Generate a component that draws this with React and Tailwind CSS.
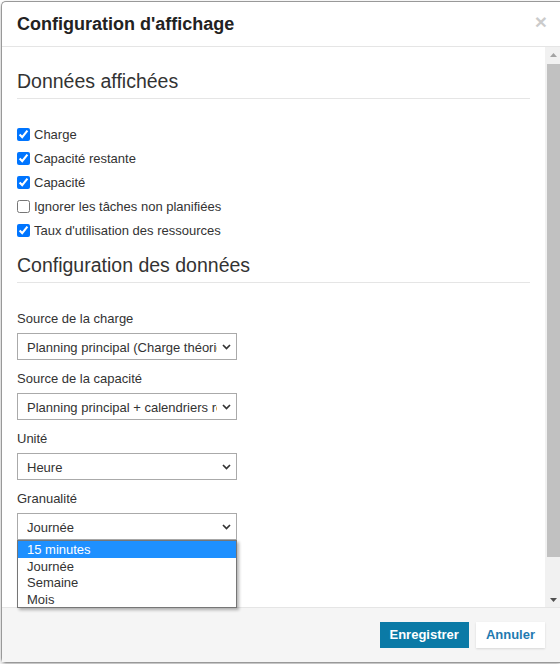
const checks = [
  { label: 'Charge', checked: true },
  { label: 'Capacité restante', checked: true },
  { label: 'Capacité', checked: true },
  { label: 'Ignorer les tâches non planifiées', checked: false },
  { label: "Taux d'utilisation des ressources", checked: true },
];

const selects = [
  { label: 'Source de la charge', value: 'Planning principal (Charge théorique)' },
  { label: 'Source de la capacité', value: 'Planning principal + calendriers ressources' },
  { label: 'Unité', value: 'Heure' },
  { label: 'Granualité', value: 'Journée', open: true },
];

const granularity = ['15 minutes', 'Journée', 'Semaine', 'Mois'];

function Chevron() {
  return (
    <svg
      className="absolute right-[6px] top-1/2 -translate-y-1/2 pointer-events-none"
      width="9"
      height="6"
      viewBox="0 0 9 6"
    >
      <path d="M1 1l3.5 3.5L8 1" fill="none" stroke="#333" strokeWidth="1.7" />
    </svg>
  );
}

function SelectField({ label, value, open }) {
  return (
    <div className="mb-[9px]">
      <div className="text-[13px] leading-[20px] mb-[4px]">{label}</div>
      <div className="relative w-[220px]">
        <select
          className="block w-full h-[27px] appearance-none bg-white border border-[#aaa] text-[13px] text-[#333] pl-[9px] pr-[19px] pt-[2px] outline-none"
          defaultValue={value}
        >
          <option value={value}>{value}</option>
        </select>
        <Chevron />
        {open && (
          <div className="absolute left-0 top-full z-10 w-full bg-white border border-[#767676] shadow-[2px_2px_3px_rgba(0,0,0,0.3)]">
            {granularity.map((g, i) => (
              <div
                key={g}
                className={
                  i === 0
                    ? 'h-[16.5px] leading-[16.5px] pt-[1px] pl-[9px] text-[13px] bg-[#1e90ff] text-white'
                    : 'h-[16.5px] leading-[16.5px] pt-[1px] pl-[9px] text-[13px] text-[#333]'
                }
              >
                {g}
              </div>
            ))}
          </div>
        )}
      </div>
    </div>
  );
}

export default function App() {
  return (
    <div className="w-[560px] h-[664px] overflow-hidden bg-white font-['Liberation_Sans',Arial,sans-serif] text-[#333]">
      <div className="ml-[1px] mt-[1px] w-[559px] h-[662px] flex flex-col border border-r-0 border-[#999] rounded-l-[5px] shadow-[0_2px_4px_rgba(0,0,0,0.3)] bg-white">
        <div className="h-[45px] shrink-0 flex items-center pl-[15px] pr-[13px] border-b border-[#e5e5e5]">
          <h4 className="text-[18px] leading-[20px] font-bold text-[#222]">Configuration d'affichage</h4>
          <button className="ml-auto -mt-[5px] text-[21px] leading-none font-bold text-black opacity-20">
            ×
          </button>
        </div>

        <div className="h-[560px] shrink-0 flex">
          <div className="flex-1 px-[15px] pt-[22.5px]">
            <h3 className="text-[19.5px] leading-[22px] font-normal pb-[6px] border-b border-[#e5e5e5]">
              Données affichées
            </h3>
            <div className="mt-[24px]">
              {checks.map(c => (
                <label key={c.label} className="h-[24px] flex items-center text-[13px]">
                  <input type="checkbox" defaultChecked={c.checked} className="m-0 w-[13px] h-[13px]" />
                  <span className="ml-[4px]">{c.label}</span>
                </label>
              ))}
            </div>
            <h3 className="mt-[11.5px] text-[19.5px] leading-[22px] font-normal pb-[6px] border-b border-[#e5e5e5]">
              Configuration des données
            </h3>
            <div className="mt-[26px]">
              {selects.map(s => (
                <SelectField key={s.label} {...s} />
              ))}
            </div>
          </div>

          <div className="w-[15px] shrink-0 bg-[#f1f1f1] flex flex-col">
            <div className="h-[15px] flex items-center justify-center pl-[1px]">
              <svg width="7" height="4" viewBox="0 0 7 4">
                <path d="M3.5 0L7 4H0z" fill="#a3a3a3" />
              </svg>
            </div>
            <div className="mt-[2px] ml-[2px] h-[493px] bg-[#c1c1c1]" />
            <div className="flex-1" />
            <div className="h-[15px] flex items-center justify-center pl-[1px]">
              <svg width="7" height="4" viewBox="0 0 7 4">
                <path d="M0 0h7L3.5 4z" fill="#505050" />
              </svg>
            </div>
          </div>
        </div>

        <div className="flex-1 flex justify-end items-start gap-[7px] pr-[15px] pt-[14px] bg-[#f5f5f5] border-t border-[#e5e5e5]">
          <button className="h-[26px] px-[10px] bg-[#0b7aa6] text-white text-[13px] font-bold">
            Enregistrer
          </button>
          <button className="h-[26px] px-[10px] bg-white text-[#1f7ab0] text-[13px] font-bold shadow-[0_1px_2px_rgba(0,0,0,0.12)]">
            Annuler
          </button>
        </div>
      </div>
    </div>
  );
}
